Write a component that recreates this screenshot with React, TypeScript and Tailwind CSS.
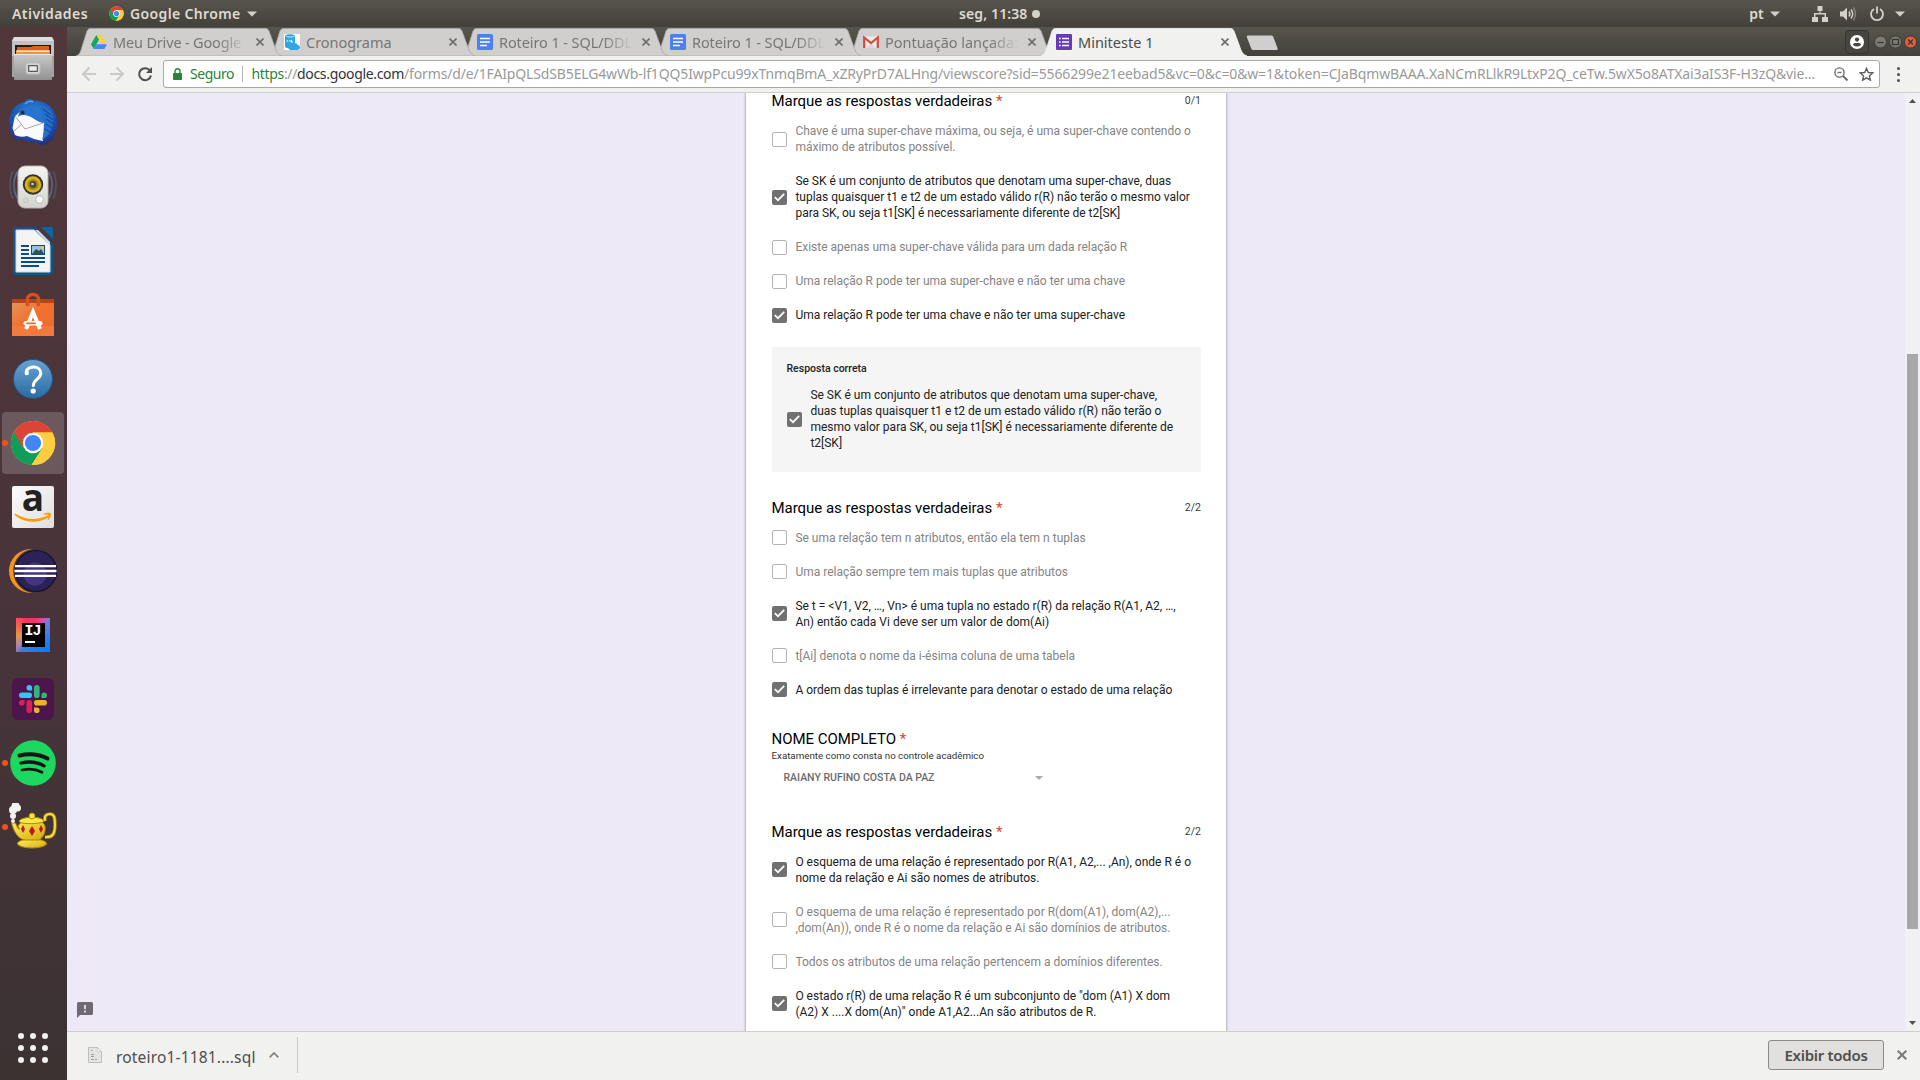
import type { ReactNode } from "react";

const UI = "font-['Noto_Sans','Open_Sans',sans-serif]";

/* ---------- small drawings ---------- */

function ChromeLogo({ size }: { size: number }) {
  return (
    <svg width={size} height={size} viewBox="0 0 48 48" className="shrink-0">
      <circle cx="24" cy="24" r="23" fill="#ffcd40" />
      <path d="M24 24 L4.1 12.5 A23 23 0 0 0 22.5 47 L34 29.5z" fill="#0f9d58" />
      <path d="M24 24 L14 29.5 L4.1 12.5 A23 23 0 0 1 44.2 13 H24z" fill="#db4437" />
      <path d="M24 13 H44.2 A23 23 0 0 1 22.5 47 L33.5 29.5z" fill="#ffcd40" />
      <circle cx="24" cy="24" r="10.7" fill="#fff" />
      <circle cx="24" cy="24" r="8.4" fill="#4285f4" />
    </svg>
  );
}

function Caret({ className }: { className?: string }) {
  return (
    <svg width="10" height="6" viewBox="0 0 10 6" className={className}>
      <path d="M0 .5h10L5 5.5z" fill="#d5d1c9" />
    </svg>
  );
}

function Dock48({ children }: { children: ReactNode }) {
  return (
    <svg width="48" height="48" viewBox="0 0 48 48">
      {children}
    </svg>
  );
}

const FilesIcon = () => (
  <Dock48>
    <defs>
      <linearGradient id="cab" x1="0" y1="0" x2="0" y2="1">
        <stop offset="0" stopColor="#c9c9c9" />
        <stop offset="1" stopColor="#929292" />
      </linearGradient>
    </defs>
    <path d="M5 2h38l2 4v36H3V6z" fill="#a3a3a3" />
    <path d="M5 2h38l2 4H3z" fill="#dedede" />
    <rect x="3" y="6" width="42" height="15" fill="#c2c2c2" />
    <rect x="6" y="10" width="36" height="12" fill="#2b1a12" />
    <path d="M8 12h14l2-1h16v10H8z" fill="#d9601f" />
    <rect x="7" y="15" width="34" height="6" fill="#f0933e" />
    <rect x="8" y="15.5" width="32" height="1.5" fill="#ffe3c4" />
    <rect x="5" y="19" width="38" height="26" rx="1" fill="url(#cab)" />
    <rect x="5" y="19" width="38" height="1" fill="#e8e8e8" />
    <rect x="17" y="28" width="14" height="11" rx="2" fill="#d6d6d6" stroke="#bcbcbc" />
    <rect x="19.7" y="30.7" width="8.6" height="5.6" fill="#e9e9e9" stroke="#3a3a3a" />
  </Dock48>
);

const ThunderbirdIcon = () => (
  <Dock48>
    <defs>
      <radialGradient id="tb" cx=".5" cy=".35" r=".7">
        <stop offset="0" stopColor="#2f8be0" />
        <stop offset=".6" stopColor="#1d58b4" />
        <stop offset="1" stopColor="#27247a" />
      </radialGradient>
    </defs>
    <path
      d="M20 0c-2 0-3 1-4 2.500C6 5 0 13 0 23c0 8 2.500 14 8 19l0-4 5 5 0-3c4 2 8 3 12 3l10 4-1-2 6 .5-3-2c4-1 7-3 9-7l-1 0c2-4 3-8 3-13C48 9 36 1.500 25 1.500 23 .5 22 0 20 0z"
      fill="url(#tb)"
    />
    <path d="M3.500 29L6 17l5-4c5-1 9 2 14 5l10 6-1 18c-7-1-11-3-16-5-4 1-8 1-12-1z" fill="#fafafa" />
    <path d="M6 17l10 13 18-6M5 32l7-6" stroke="#a5a7ad" strokeWidth="1" fill="none" />
    <path d="M9 18c2-10 10-12 17-8 5 3 9 8 8 14-5-1-8-4-12-6-5-2-9-3-13 0z" fill="#2674cf" />
    <path d="M28 6c7 9 10 20 5 35 9-5 13-16 10-27-3-5-8-8-15-8z" fill="#2470cb" />
    <path d="M34 10l8 6M36 15l8 6M37 20l8 5M37 25l7 5M36 30l6 4" stroke="#1a4ca0" strokeWidth="1.200" />
    <path d="M16 5c3-3 6-3 8-2" stroke="#5aa6ea" strokeWidth="1.500" fill="none" />
    <circle cx="13.500" cy="13.500" r="2.200" fill="#1c4b7a" />
    <circle cx="13.500" cy="13.500" r="1.200" fill="#0c1c33" />
  </Dock48>
);

const RhythmboxIcon = () => (
  <Dock48>
    <defs>
      <linearGradient id="spk" x1="0" y1="0" x2="0" y2="1">
        <stop offset="0" stopColor="#f4f4f2" />
        <stop offset="1" stopColor="#d3d3cf" />
      </linearGradient>
    </defs>
    <g fill="none" stroke="#5d7da8" strokeWidth="1.800">
      <path d="M4 8c-4 8-4 20 0 28" opacity=".35" />
      <path d="M8 9c-4 8-4 18 0 26" opacity=".7" />
      <path d="M44 8c4 8 4 20 0 28" opacity=".35" />
      <path d="M40 9c4 8 4 18 0 26" opacity=".7" />
    </g>
    <rect x="9" y="3" width="30" height="42" rx="7" fill="url(#spk)" stroke="#b5b5b0" />
    <circle cx="24" cy="21.500" r="10.200" fill="#33332f" />
    <circle cx="24" cy="21.500" r="8.300" fill="#d9b51b" />
    <circle cx="24" cy="21.500" r="5.600" fill="#a88a14" />
    <circle cx="24" cy="21.500" r="3.400" fill="#4a4a48" />
    <circle cx="23.500" cy="21" r="1.300" fill="#c9c9c9" />
    <circle cx="30.500" cy="36.500" r="3.800" fill="#f7f7f5" stroke="#bdbdb8" />
    <rect x="15" y="35" width="3.500" height="4.500" rx="1" fill="none" stroke="#c3c3be" />
  </Dock48>
);

const WriterIcon = () => (
  <Dock48>
    <path d="M6 0h20l18 17v28a3 3 0 0 1-3 3H7a3 3 0 0 1-3-3V2a2 2 0 0 1 2-2z" fill="#0b568d" />
    <path d="M32 0h12v12z" fill="#0a66a5" />
    <path d="M7 3h18l16 15v27H7z" fill="#f4f4f4" stroke="#d6d6d6" />
    <path d="M26 3l15 15v-3L29 3z" fill="#cfe0ec" />
    <path d="M12 19h8M12 23h8M12 27h8M12 31h24M12 35h24M12 39h18" stroke="#0b4f80" strokeWidth="2" />
    <rect x="22.500" y="18.500" width="13" height="9" fill="#8cc4ea" stroke="#0b4f80" />
    <path d="M23 27l4-5 3 2 2-2 3 5z" fill="#3a4b52" />
    <circle cx="33.500" cy="20.500" r="1.500" fill="#f6c73b" />
  </Dock48>
);

const SoftwareIcon = () => (
  <Dock48>
    <defs>
      <linearGradient id="bag" x1="0" y1="0" x2="1" y2="1">
        <stop offset="0" stopColor="#e8935a" />
        <stop offset=".45" stopColor="#f1702f" />
        <stop offset="1" stopColor="#ef6a30" />
      </linearGradient>
    </defs>
    <path d="M3 8h42v6H3z" fill="#b8431a" />
    <rect x="3" y="12" width="42" height="33" fill="url(#bag)" />
    <rect x="3" y="35" width="42" height="10" fill="#f58148" opacity=".6" />
    <path d="M18.500 15V8a5 5 0 0 1 5-4.500h1a5 5 0 0 1 5 4.500v7" fill="none" stroke="#d9501f" strokeWidth="3.500" />
    <path d="M17 38l7-17L31 38" fill="none" stroke="#fff" strokeWidth="4" />
    <rect x="14.500" y="30" width="19" height="4.600" rx="2.300" fill="#fff" />
    <rect x="17" y="31.400" width="10" height="1.800" rx=".9" fill="#ef6a30" />
  </Dock48>
);

const HelpIcon = () => (
  <Dock48>
    <defs>
      <linearGradient id="hlp" x1="0" y1="0" x2="0" y2="1">
        <stop offset="0" stopColor="#6aa3d2" />
        <stop offset="1" stopColor="#2a6ba3" />
      </linearGradient>
    </defs>
    <circle cx="24" cy="24" r="19.500" fill="url(#hlp)" stroke="#1f5686" />
    <path
      d="M17.500 18.500c-1-3.500 2.500-6.500 7-6.500s7.300 2.800 7.300 6.300c0 5.700-7.500 5.900-7.500 12.200"
      fill="none"
      stroke="#fff"
      strokeWidth="3"
      strokeLinecap="round"
    />
    <circle cx="17.800" cy="18" r="2.200" fill="#fff" />
    <circle cx="24.200" cy="36" r="2.600" fill="#fff" />
  </Dock48>
);

const AmazonIcon = () => (
  <div className="grid size-[42px] justify-items-center rounded-[2px] bg-linear-to-br from-[#fbfbfb] to-[#dfdfdf]">
    <span className="col-start-1 row-start-1 h-7 font-['Open_Sans',sans-serif] text-[37px] leading-[22px] font-bold text-[#222]">
      a
    </span>
    <svg width="42" height="42" viewBox="0 0 42 42" className="col-start-1 row-start-1">
      <path d="M3 27.500c10 6.500 22 7.500 33.500 1.500l1 1.700C26 38 12 37 2.700 29z" fill="#f90" />
      <path d="M31.500 28c2-1.200 6-1.600 7-.7s0 4-2 6.800l-1-.4c.9-2 1.500-4 1-4.600s-3-.6-5-.4z" fill="#f90" />
    </svg>
  </div>
);

const EclipseIcon = () => (
  <Dock48>
    <circle cx="22" cy="24" r="22" fill="#f7941e" />
    <circle cx="26.500" cy="24" r="22.300" fill="#47343a" />
    <circle cx="27" cy="24" r="20.500" fill="#2c2255" stroke="#15122c" strokeWidth="1.200" />
    <circle cx="26" cy="27" r="11.500" fill="#43367f" />
    <path d="M6 19.200h41M5.500 24h42M6 28.800h41" stroke="#fff" strokeWidth="2.300" />
  </Dock48>
);

const IntellijIcon = () => (
  <div className="grid size-[34px] place-items-center bg-[conic-gradient(from_45deg,#6b7fd6,#087cfa_25%,#3b7fe0_48%,#b07db0_52%,#e29a47_62%,#fe315d_80%,#fe317a_92%,#9a6fd0)]">
    <div className="flex h-[24px] w-[23px] flex-col items-start bg-black pl-[3px]">
      <span className="h-[18px] font-['Liberation_Mono',monospace] text-[15px] leading-[18px] font-bold tracking-[-1px] text-white">
        IJ
      </span>
      <i className="h-[2px] w-[10px] bg-white" />
    </div>
  </div>
);

const SlackIcon = () => (
  <div className="grid size-[42px] place-items-center rounded-[6px] bg-[#4c154c]">
    <svg width="28" height="28" viewBox="0 0 28 28">
      <g fill="#36c5f0">
        <rect x="0" y="7.500" width="13" height="5.600" rx="2.800" />
        <path d="M7.500 2.800a2.800 2.800 0 0 1 5.600 0v2.800h-2.800a2.800 2.800 0 0 1-2.800-2.800z" />
      </g>
      <g fill="#2eb67d">
        <rect x="15" y="0" width="5.600" height="13" rx="2.800" />
        <path d="M25.200 7.500a2.800 2.800 0 0 1 0 5.600h-2.800v-2.800a2.800 2.800 0 0 1 2.800-2.800z" />
      </g>
      <g fill="#e01e5a">
        <rect x="7.500" y="15" width="5.600" height="13" rx="2.800" />
        <path d="M2.800 20.600a2.800 2.800 0 0 1 0-5.600h2.800v2.800a2.800 2.800 0 0 1-2.800 2.800z" />
      </g>
      <g fill="#ecb22e">
        <rect x="15" y="15" width="13" height="5.600" rx="2.800" />
        <path d="M20.600 25.200a2.800 2.800 0 0 1-5.600 0v-2.800h2.800a2.800 2.800 0 0 1 2.800 2.800z" />
      </g>
    </svg>
  </div>
);

const SpotifyIcon = () => (
  <Dock48>
    <circle cx="24" cy="24" r="22.800" fill="#1ed760" />
    <g fill="none" stroke="#191414" strokeLinecap="round">
      <path d="M10.500 16.500c9.500-2.300 19.500-1.300 28 3" strokeWidth="4" />
      <path d="M12 24c8-1.800 16.500-1 23 2.800" strokeWidth="3.300" />
      <path d="M13 31c7-1.500 14-.8 20 2.300" strokeWidth="2.700" />
    </g>
  </Dock48>
);

const LampIcon = () => (
  <Dock48>
    <defs>
      <linearGradient id="lmp" x1="0" y1="0" x2="1" y2="1">
        <stop offset="0" stopColor="#fff05e" />
        <stop offset="1" stopColor="#d9a90c" />
      </linearGradient>
    </defs>
    <path d="M36 18c-1-6 2-7 5-7 4 0 5 3 5 11s-2 13-10 12" fill="none" stroke="#a88709" strokeWidth="3.600" />
    <path d="M36 18c-1-6 2-7 5-7 4 0 5 3 5 11s-2 13-10 12" fill="none" stroke="#f3dc3c" strokeWidth="2" />
    <ellipse cx="23" cy="40.500" rx="14.500" ry="4.500" fill="url(#lmp)" stroke="#a88709" />
    <path d="M9 23c4-8 25-8 27 0 1 6-2 12-6 14H16C9 36 5 29 2.500 20l4 0c2 4 2 6 4 6z" fill="url(#lmp)" stroke="#a88709" />
    <path d="M10 18c3-5 23-5 25 0 0 3-25 4-25 0z" fill="#f9e84a" stroke="#a88709" />
    <circle cx="23" cy="13" r="3" fill="#f9e84a" stroke="#a88709" />
    <g fill="#c4122b">
      <path d="M14 22l2 4-2 4-2-4zM23 23l3 5-3 5-3-5zM32 22l2 4-2 4-2-4z" />
    </g>
    <g fill="#f2f2f0">
      <circle cx="6.500" cy="3" r="4" />
      <circle cx="4" cy="7" r="4" />
      <circle cx="8.500" cy="5" r="3.500" />
      <circle cx="4" cy="13" r="3" />
      <circle cx="4" cy="18" r="2" />
    </g>
  </Dock48>
);

/* ---------- desktop bars ---------- */

function TopBar() {
  return (
    <div
      className={`flex h-[27px] shrink-0 items-center bg-linear-to-b from-[#59554d] to-[#42403a] text-[14px] font-semibold text-[#dfdbd2] ${UI}`}
    >
      <div className="flex w-[959px] items-center pl-3">
        <span className="w-[97px] tracking-[0.45px]">Atividades</span>
        <ChromeLogo size={15} />
        <span className="ml-[6px] tracking-[0.36px]">Google Chrome</span>
        <Caret className="ml-[6px]" />
      </div>
      <span className="tracking-[0.12px]">seg, 11:38</span>
      <i className="ml-1 size-2 rounded-full bg-[#d5d1c9]" />
      <div className="ml-auto flex items-center pr-[15px]">
        <span className="tracking-[0.2px]">pt</span>
        <Caret className="ml-[6px]" />
        <svg width="16" height="16" viewBox="0 0 16 16" className="ml-[32px]" fill="#d5d1c9">
          <path d="M5.500 0h5v5h-2v2H14v4h2v5h-6v-5h2.500V8.500h-9V11H6v5H0v-5h2V7h5.500V5h-2z" />
        </svg>
        <svg width="17" height="16" viewBox="0 0 17 16" className="ml-3" fill="none" stroke="#d5d1c9" strokeWidth="1.500">
          <path d="M0 5.500h3L7 1.500v13l-4-4H0z" fill="#d5d1c9" stroke="none" />
          <path d="M9 5.500c1 1.500 1 3.500 0 5" />
          <path d="M11 3.500c2 2.700 2 6.300 0 9" />
          <path d="M13.300 1.500c2.700 4 2.700 9 0 13" opacity=".4" />
        </svg>
        <svg width="16" height="16" viewBox="0 0 16 16" className="ml-[12px]" fill="none" stroke="#d5d1c9" strokeWidth="1.800">
          <path d="M5 3a6 6 0 1 0 6 0" />
          <path d="M8 .5v7" />
        </svg>
        <Caret className="ml-[10px]" />
      </div>
    </div>
  );
}

const dockItems: { icon: ReactNode; running?: boolean; active?: boolean }[] = [
  { icon: <FilesIcon /> },
  { icon: <ThunderbirdIcon /> },
  { icon: <RhythmboxIcon /> },
  { icon: <WriterIcon /> },
  { icon: <SoftwareIcon /> },
  { icon: <HelpIcon /> },
  { icon: <ChromeLogo size={46} />, running: true, active: true },
  { icon: <AmazonIcon /> },
  { icon: <EclipseIcon /> },
  { icon: <IntellijIcon /> },
  { icon: <SlackIcon /> },
  { icon: <SpotifyIcon />, running: true },
  { icon: <LampIcon />, running: true },
];

function Dock() {
  return (
    <div className="flex w-[67px] shrink-0 flex-col bg-linear-to-b from-[#51373a] via-[#47343a] via-60% to-[#3b3232]">
      {dockItems.map((d, i) => (
        <div key={i} className="flex h-16 w-[66px] shrink-0 items-center justify-center">
          <div
            className={`relative grid size-[62px] place-items-center rounded-[4px] ${d.active ? "bg-[#6c595d]" : ""}`}
          >
            {d.icon}
            {d.running && <i className="absolute top-7 left-0 size-[6px] rounded-full bg-[#e95420]" />}
          </div>
        </div>
      ))}
      <div className="mt-auto mb-[17px] ml-[18px] grid w-[30px] grid-cols-3 gap-[6px]">
        {Array.from({ length: 9 }, (_, i) => (
          <i key={i} className="size-[6px] rounded-full bg-[#f2f1f0]" />
        ))}
      </div>
    </div>
  );
}

/* ---------- browser window ---------- */

const DriveFav = (
  <svg width="16" height="14" viewBox="0 0 16 14">
    <path d="M5.300 0h5.400L16 9.300h-5.400z" fill="#ffcf48" />
    <path d="M5.300 0L8 4.700 2.700 14 0 9.300z" fill="#11a861" />
    <path d="M5.400 9.300H16L13.300 14H2.700z" fill="#4688f4" />
  </svg>
);
const SqlFav = (
  <svg width="16" height="16" viewBox="0 0 16 16">
    <rect width="16" height="16" fill="#fff" />
    <path d="M1 2c0-2.500 10-2.500 10 0v7.500c1.500-.5 2.500.5 2.500 1.500 1.500 0 2.500 1 2.500 2.500S15 16 13 16H6l-2-2c-2 0-3-.5-3-2z" fill="#33a5e3" />
    <path d="M2 2.300c1.500 1 6.500 1 8 0" stroke="#fff" strokeWidth=".7" fill="none" />
    <path d="M2.500 7h1.700M5 7h1.500M7.500 6v2h1.500" stroke="#fff" strokeWidth="1.200" fill="none" />
  </svg>
);
const DocsFav = (
  <svg width="16" height="16" viewBox="0 0 16 16">
    <rect width="16" height="16" rx="1.500" fill="#4a80f0" />
    <path d="M3 4.500h10M3 8h10M3 11.500h7" stroke="#fff" strokeWidth="1.700" />
  </svg>
);
const GmailFav = (
  <svg width="16" height="16" viewBox="0 0 16 16">
    <rect x="1" y="2.500" width="14" height="11.500" fill="#ececec" />
    <path d="M3 14L8 9l5 5z" fill="#d9d9d9" />
    <path d="M1.200 14V3.500L8 9l6.800-5.500V14" fill="none" stroke="#d54b3d" strokeWidth="2.200" />
  </svg>
);
const FormsFav = (
  <svg width="16" height="16" viewBox="0 0 16 16">
    <rect width="16" height="16" rx="1" fill="#673ab7" />
    <path d="M6 4.500h7M6 8h7M6 11.500h7M3 4.500h1.700M3 8h1.700M3 11.500h1.700" stroke="#fff" strokeWidth="1.600" />
  </svg>
);

const tabs = [
  { title: "Meu Drive - Google", icon: DriveFav, fade: true, tracking: "tracking-[-0.17px]" },
  { title: "Cronograma", icon: SqlFav, tracking: "tracking-[-0.03px]" },
  { title: "Roteiro 1 - SQL/DDL", icon: DocsFav, fade: true, tracking: "tracking-[-0.09px]" },
  { title: "Roteiro 1 - SQL/DDL", icon: DocsFav, fade: true, tracking: "tracking-[-0.09px]" },
  { title: "Pontuação lançada:", icon: GmailFav, fade: true, tracking: "tracking-[-0.02px]" },
  { title: "Miniteste 1", icon: FormsFav, active: true, tracking: "tracking-normal" },
];

function Tab({ tab, index }: { tab: (typeof tabs)[number]; index: number }) {
  return (
    <div
      className="relative -mr-[12px] flex h-7 w-[205px] shrink-0 items-center"
      style={{ zIndex: tab.active ? 20 : 10 - index }}
    >
      <svg width="209" height="28" viewBox="0 0 209 28" className="absolute top-0 -left-[1px]">
        <path
          d="M0 28C3 27 4 25 5 22L11 3C12 1 13 .5 15 .5H189C191 .5 192 1 193 3L200 22C201 25 203 27 206 28z"
          fill={tab.active ? "#f1f1ef" : "#d0cfcd"}
          stroke={tab.active ? "#f1f1ef" : "#a9a8a5"}
          strokeWidth=".8"
        />
      </svg>
      <div className="relative flex w-full items-center pl-[14px]">
        <span className="grid size-4 place-items-center">{tab.icon}</span>
        <span
          className={`ml-[6px] w-[138px] overflow-hidden text-[14.5px] leading-[22px] whitespace-nowrap ${tab.tracking} ${
            tab.active ? "text-[#4c4c4c]" : "text-[#777673]"
          } ${tab.fade ? "[mask-image:linear-gradient(to_right,black_76%,transparent_97%)]" : ""}`}
        >
          {tab.title}
        </span>
        <svg width="8" height="8" viewBox="0 0 8 8" className="ml-[5px]" stroke="#6e6d6a" strokeWidth="1.600">
          <path d="M.5.5l7 7M7.500.5l-7 7" />
        </svg>
      </div>
    </div>
  );
}

function TabStrip() {
  return (
    <div className={`flex h-[29px] items-end bg-linear-to-b from-[#57554c] to-[#42413b] pl-[10px] ${UI}`}>
      {tabs.map((t, i) => (
        <Tab key={i} tab={t} index={i} />
      ))}
      <svg width="34" height="16" viewBox="0 0 34 16" className="mb-[5px] ml-[11px]">
        <path d="M2 .5h23c1.500 0 2 .5 2.500 2l4 10.500c.5 1.500 0 2-1.500 2H8c-2 0-2.500-.5-3-2L1 2.500C.500 1 .800.500 2 .500z" fill="#d0cfcd" />
      </svg>
      <div className="mb-[2px] ml-auto flex items-center pr-[3px]">
        <div className="mr-[5px] grid h-6 w-[24px] place-items-center rounded-[4px] border border-[#35342f] bg-[#47453f]">
          <svg width="14" height="14" viewBox="0 0 14 14">
            <circle cx="7" cy="7" r="7" fill="#fff" />
            <circle cx="7" cy="4.600" r="2.100" fill="#47453f" />
            <path d="M2.800 9.300C4 7.600 10 7.600 11.200 9.300c-1.500 3-6.900 3-8.400 0z" fill="#47453f" />
          </svg>
        </div>
        <svg width="43" height="14" viewBox="0 0 43 14">
          <g stroke="#35342f" strokeWidth=".8">
            <circle cx="6.500" cy="7" r="6" fill="#7d7a73" />
            <circle cx="21.500" cy="7" r="6" fill="#7d7a73" />
            <circle cx="36.500" cy="7" r="6" fill="#e2603a" />
          </g>
          <g fill="none" stroke="#35342f" strokeWidth="1.200">
            <path d="M3.500 7.500h6" />
            <rect x="18.500" y="4.500" width="6" height="5" />
            <path d="M34 4.500l5 5M39 4.500l-5 5" />
          </g>
        </svg>
      </div>
    </div>
  );
}

function Toolbar() {
  return (
    <div className={`flex h-[37px] items-center border-b border-[#cfcecb] bg-[#f1f1ef] pl-[15px] ${UI}`}>
      <svg width="76" height="16" viewBox="0 0 76 16" fill="none" strokeWidth="2">
        <path d="M14 8H1.500M7.500 1.500L1 8l6.500 6.500" stroke="#cbcac8" />
        <path d="M28 8h12.500M34.500 1.500L41 8l-6.500 6.500" stroke="#cbcac8" />
        <path d="M68 4.600A6 6 0 1 0 69 9.500" stroke="#4f4e4c" />
        <path d="M70 1v6h-6z" fill="#4f4e4c" />
      </svg>
      <div className="ml-[5px] flex h-7 w-[1717px] items-center rounded-[3px] border border-[#a9a8a6] bg-white pl-[9px] text-[14px] leading-5">
        <svg width="9" height="13" viewBox="0 0 9 13">
          <rect y="5" width="9" height="7" rx=".8" fill="#2a8434" />
          <path d="M2 5.500V3.200a2.500 2.500 0 0 1 5 0v2.300" fill="none" stroke="#2a8434" strokeWidth="1.400" />
        </svg>
        <span className="ml-[8px] w-[52px] tracking-[-0.47px] text-[#2a8434]">Seguro</span>
        <i className="h-4 w-px bg-[#b5b5b5]" />
        <span className="ml-[8.500px] w-[1574.500px] whitespace-nowrap text-[#9a9a9a]">
          <span className="tracking-[-0.335px]">
            <span className="text-[#2a8434]">https</span>://<span className="text-[#333]">docs.google.com</span>
          </span>
          <span className="tracking-[-0.141px]">
            /forms/d/e/1FAIpQLSdSB5ELG4wWb-lf1QQ5IwpPcu99xTnmqBmA_xZRyPrD7ALHng/viewscore?sid=5566299e21eebad5&amp;vc=0&amp;c=0&amp;w=1&amp;token=CJaBqmwBAAA.XaNCmRLlkR9LtxP2Q_ceTw.5wX5o8ATXai3aIS3F-H3zQ&amp;vie...
          </span>
        </span>
        <svg width="14" height="14" viewBox="0 0 14 14" className="ml-[8px]" fill="none" stroke="#6e6e6e" strokeWidth="1.400">
          <circle cx="5.500" cy="5.500" r="4.600" />
          <path d="M3.500 5.500h4" />
          <path d="M9 9l4.500 4.500" strokeWidth="2" />
        </svg>
        <svg width="15" height="14" viewBox="0 0 15 14" className="ml-[11px]" fill="none" stroke="#5e5e5e" strokeWidth="1.400">
          <path d="M7.500 1.400l1.800 4.100 4.400.4-3.300 3 1 4.300-3.900-2.300-3.900 2.300 1-4.300-3.300-3 4.400-.4z" />
        </svg>
      </div>
      <div className="ml-[17px] flex flex-col gap-[3px]">
        <i className="size-[3px] rounded-full bg-[#4f4e4c]" />
        <i className="size-[3px] rounded-full bg-[#4f4e4c]" />
        <i className="size-[3px] rounded-full bg-[#4f4e4c]" />
      </div>
    </div>
  );
}

/* ---------- form ---------- */

type Option = { lines: string[]; checked?: boolean };

function Checkbox({ checked, raised }: { checked?: boolean; raised?: boolean }) {
  const nudge = raised ? "mb-px" : "mt-px";
  return checked ? (
    <span className={`grid size-[15px] shrink-0 place-items-center rounded-[2px] bg-[#717171] ${nudge}`}>
      <svg width="11" height="9" viewBox="0 0 11 9" fill="none" stroke="#fff" strokeWidth="1.700">
        <path d="M.8 4.200L4 7.200 10.200.9" />
      </svg>
    </span>
  ) : (
    <span className={`size-[15px] shrink-0 rounded-[2px] border-[1.500px] border-[#b4b4b4] bg-white ${nudge}`} />
  );
}

function OptionRow({ option, raised }: { option: Option; raised?: boolean }) {
  return (
    <div className="flex items-center py-[9px]">
      <Checkbox checked={option.checked} raised={raised} />
      <div
        className={`ml-[8.400px] text-[12px] leading-4 whitespace-nowrap ${option.checked ? "text-[#212121]" : "text-[#848484]"}`}
      >
        {option.lines.map((l) => (
          <p key={l}>{l}</p>
        ))}
      </div>
    </div>
  );
}

function QuestionTitle({ title, score }: { title: string; score?: string }) {
  return (
    <div className="-ml-[0.500px] flex h-5 items-center justify-between">
      <h2 className="text-[15px] leading-5 tracking-[-0.03px] text-black">
        {title} <span className="text-[#db4437]">*</span>
      </h2>
      {score && <span className="text-[10.5px] text-[#3c3c3c]">{score}</span>}
    </div>
  );
}

function Question({
  score,
  options,
  raised,
  children,
}: {
  score: string;
  options: Option[];
  raised?: boolean;
  children?: ReactNode;
}) {
  return (
    <section>
      <QuestionTitle title="Marque as respostas verdadeiras" score={score} />
      <div className="pt-[3px]">
        {options.map((o) => (
          <OptionRow key={o.lines[0]} option={o} raised={raised} />
        ))}
      </div>
      {children}
    </section>
  );
}

const q1: Option[] = [
  { lines: ["Chave é uma super-chave máxima, ou seja, é uma super-chave contendo o", "máximo de atributos possível."] },
  {
    checked: true,
    lines: [
      "Se SK é um conjunto de atributos que denotam uma super-chave, duas",
      "tuplas quaisquer t1 e t2 de um estado válido r(R) não terão o mesmo valor",
      "para SK, ou seja t1[SK] é necessariamente diferente de t2[SK]",
    ],
  },
  { lines: ["Existe apenas uma super-chave válida para um dada relação R"] },
  { lines: ["Uma relação R pode ter uma super-chave e não ter uma chave"] },
  { checked: true, lines: ["Uma relação R pode ter uma chave e não ter uma super-chave"] },
];

const q1Answer: Option = {
  checked: true,
  lines: [
    "Se SK é um conjunto de atributos que denotam uma super-chave,",
    "duas tuplas quaisquer t1 e t2 de um estado válido r(R) não terão o",
    "mesmo valor para SK, ou seja t1[SK] é necessariamente diferente de",
    "t2[SK]",
  ],
};

const q2: Option[] = [
  { lines: ["Se uma relação tem n atributos, então ela tem n tuplas"] },
  { lines: ["Uma relação sempre tem mais tuplas que atributos"] },
  {
    checked: true,
    lines: ["Se t = <V1, V2, …, Vn> é uma tupla no estado r(R) da relação R(A1, A2, …,", "An) então cada Vi deve ser um valor de dom(Ai)"],
  },
  { lines: ["t[Ai] denota o nome da i-ésima coluna de uma tabela"] },
  { checked: true, lines: ["A ordem das tuplas é irrelevante para denotar o estado de uma relação"] },
];

const q3: Option[] = [
  {
    checked: true,
    lines: ["O esquema de uma relação é representado por R(A1, A2,... ,An), onde R é o", "nome da relação e Ai são nomes de atributos."],
  },
  { lines: ["O esquema de uma relação é representado por R(dom(A1), dom(A2),...", ",dom(An)), onde R é o nome da relação e Ai são domínios de atributos."] },
  { lines: ["Todos os atributos de uma relação pertencem a domínios diferentes."] },
  {
    checked: true,
    lines: ['O estado r(R) de uma relação R é um subconjunto de "dom (A1) X dom', '(A2) X ....X dom(An)" onde A1,A2...An são atributos de R.'],
  },
];

function FormCard() {
  return (
    <div className="-mt-[3px] ml-[679px] h-[950px] w-[480px] bg-white pt-px pr-[25px] pl-[26px] font-['Roboto',sans-serif] shadow-[0_0_2px_1px_rgba(0,0,0,0.24)]">
      <Question score="0/1" options={q1}>
        <div className="mt-[15px] h-[125px] bg-[#f5f5f5] px-[15px] pt-[15px]">
          <h3 className="-ml-[0.500px] h-4 text-[10.5px] leading-[14px] font-medium text-[#212121]">Resposta correta</h3>
          <OptionRow option={q1Answer} />
        </div>
      </Question>
      <div className="h-[26px]" />
      <Question score="2/2" options={q2} raised />
      <section className="mt-[22px] h-[93px]">
        <QuestionTitle title="NOME COMPLETO" />
        <p className="-ml-[0.500px] text-[9.75px] leading-[13px] text-[#333]">Exatamente como consta no controle acadêmico</p>
        <div className="mt-[8px] flex h-4 w-[270.500px] items-center justify-between pl-[11.500px]">
          <span className="text-[10.5px] leading-4 font-medium whitespace-nowrap text-[#6b6b6b]">RAIANY RUFINO COSTA DA PAZ</span>
          <svg width="8" height="4" viewBox="0 0 8 4">
            <path d="M0 0h8L4 4z" fill="#ababab" />
          </svg>
        </div>
      </section>
      <Question score="2/2" options={q3} raised />
    </div>
  );
}

function Page() {
  return (
    <div className="flex h-[938px] shrink-0 overflow-hidden">
      <div className="relative flex h-full flex-1 items-start overflow-hidden bg-[#ede9f6]">
        <FormCard />
        <svg width="16" height="16" viewBox="0 0 16 16" className="absolute bottom-[13px] left-[10px]">
          <path d="M1.500 0h13A1.500 1.500 0 0 1 16 1.500v10a1.500 1.500 0 0 1-1.500 1.500H3l-3 3V1.500A1.500 1.500 0 0 1 1.500 0z" fill="#6d6a74" />
          <path d="M8 3v4M8 8.500v2" stroke="#ede9f6" strokeWidth="1.700" />
        </svg>
      </div>
      <div className="flex h-full w-[15px] flex-col items-center bg-[#f1f1f1]">
        <svg width="7" height="4" viewBox="0 0 7 4" className="mt-[6px]">
          <path d="M0 4h7L3.500 0z" fill="#505050" />
        </svg>
        <div className="mt-[251px] h-[575px] w-[11px] bg-[#a8a8a8]" />
        <svg width="7" height="4" viewBox="0 0 7 4" className="mt-auto mb-[6px]">
          <path d="M0 0h7L3.500 4z" fill="#505050" />
        </svg>
      </div>
    </div>
  );
}

function DownloadShelf() {
  return (
    <div className={`flex h-[49px] items-center border-t border-[#cfcecb] bg-[#f1f1ef] pb-[2px] ${UI}`}>
      <div className="flex h-[36px] w-[231px] items-center border-r border-[#c9c8c6] pl-[21px]">
        <svg width="14" height="16" viewBox="0 0 14 16">
          <path d="M.5.5h9l4 4v11H.5z" fill="#e4e4e3" stroke="#bebebc" />
          <path d="M9.500.5v4h4z" fill="#fafafa" stroke="#bebebc" strokeWidth=".7" />
          <path d="M3 3.500h1.500M3 7.500h3M3 9.500h3M7 12.500h2M3 12.500h3" stroke="#9c9c9a" />
        </svg>
        <span className="mt-[3px] ml-[14px] text-[15.5px] leading-6 tracking-[0.17px] text-[#4f4e4c]">roteiro1-1181....sql</span>
        <svg width="10" height="6" viewBox="0 0 10 6" className="ml-[13px]" fill="none" stroke="#7f7f7d" strokeWidth="1.700">
          <path d="M.7 5.300L5 1l4.300 4.300" />
        </svg>
      </div>
      <button className="ml-auto h-[30px] w-[116px] rounded-[3px] border border-[#8b8a88] bg-[#e1e0de] text-[15px] leading-6 font-semibold tracking-[-0.29px] text-[#4f4e4c]">
        Exibir todos
      </button>
      <svg width="10" height="10" viewBox="0 0 10 10" className="mr-[13px] ml-[13px]" stroke="#7b7a78" strokeWidth="2">
        <path d="M.7.7l8.600 8.600M9.300.7L.7 9.300" />
      </svg>
    </div>
  );
}

export default function App() {
  return (
    <div className="flex h-[1080px] w-[1920px] flex-col overflow-hidden">
      <TopBar />
      <div className="flex min-h-0 flex-1">
        <Dock />
        <div className="flex min-w-0 flex-1 flex-col">
          <TabStrip />
          <Toolbar />
          <Page />
          <DownloadShelf />
        </div>
      </div>
    </div>
  );
}
